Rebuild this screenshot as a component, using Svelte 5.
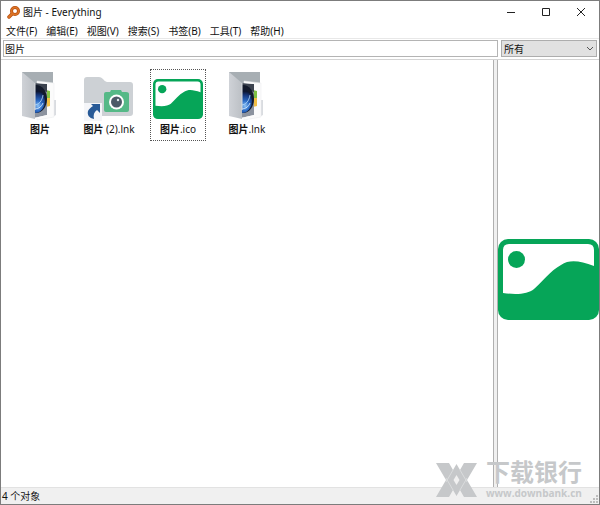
<script lang="ts">
	interface FileItem {
		match: string;
		rest: string;
		icon: 'folder' | 'camera' | 'image';
	}

	const menus = ['文件(F)', '编辑(E)', '视图(V)', '搜索(S)', '书签(B)', '工具(T)', '帮助(H)'];
	const filters = ['所有', '音频', '文档', '图片', '视频'];

	const files: FileItem[] = [
		{ match: '图片', rest: '', icon: 'folder' },
		{ match: '图片', rest: ' (2).lnk', icon: 'camera' },
		{ match: '图片', rest: '.ico', icon: 'image' },
		{ match: '图片', rest: '.lnk', icon: 'folder' }
	];

	let query = $state('图片');
	let filter = $state('所有');
	let selected = $state(2);

	let results = $derived(files.filter((f) => (f.match + f.rest).includes(query)));
</script>

{#snippet picture()}
	<svg class="picture" viewBox="0 0 101 81" aria-hidden="true">
		<rect width="101" height="81" rx="10" fill="#06a558" />
		<path
			d="M5 54V11Q5 5 11 5H90Q96 5 96 11V27C82 22 72 20 63 26C52 32 44 43 36 50C30 55 19 56 5 54Z"
			fill="#fff"
		/>
		<circle cx="18.500" cy="20.500" r="8.500" fill="#06a558" />
	</svg>
{/snippet}

{#snippet folder()}
	<svg class="folder" viewBox="0 0 50 50" aria-hidden="true">
		<defs>
			<linearGradient id="flap" x1="0" x2="1">
				<stop offset="0" stop-color="#cfd2d7" />
				<stop offset="1" stop-color="#bcc0c5" />
			</linearGradient>
			<radialGradient id="globe" cx="0.650" cy="0.700" r="0.600">
				<stop offset="0" stop-color="#8fc4f7" />
				<stop offset="0.350" stop-color="#2b6bc6" />
				<stop offset="0.750" stop-color="#16367a" />
				<stop offset="1" stop-color="#0d1630" />
			</radialGradient>
			<clipPath id="photo">
				<path d="M19 11L32 12V43L19 46Z" />
			</clipPath>
		</defs>
		<path d="M7 0H38V14H7Z" fill="#a7aeb3" />
		<path d="M37 28H41V43L37 45Z" fill="#d9dce0" />
		<path d="M22 9L39 11V45L22 48Z" fill="#fbfbfb" stroke="#e9eaec" stroke-width="0.500" />
		<path d="M31 18L35 19V26H31Z" fill="#7fc043" />
		<path d="M31 26H35V34L31 35Z" fill="#f3bf45" />
		<g clip-path="url(#photo)">
			<path d="M19 11L32 12V43L19 46Z" fill="#8c939f" />
			<path d="M19 11L32 12V20L19 16Z" fill="#3c434f" />
			<ellipse cx="21" cy="27" rx="11" ry="14" fill="#131a2b" />
			<ellipse cx="20" cy="29" rx="10" ry="12" fill="url(#globe)" />
			<path d="M19 33C24 33 27 29 28 23" fill="none" stroke="#b9dcfa" stroke-width="0.800" />
			<path d="M20 37C24 37 27 34 28 31" fill="none" stroke="#e3f2ff" stroke-width="0.800" />
		</g>
		<path d="M7 0L20 11V47L7 44Z" fill="url(#flap)" />
		<path d="M20 11V38" stroke="#d9dde1" stroke-width="1" />
	</svg>
{/snippet}

{#snippet camera()}
	<svg class="camera" viewBox="0 0 50 50" aria-hidden="true">
		<path d="M3 5H15Q17 5 19 7Q21 10 23 10H46Q49 10 49 13V41Q49 44 46 44H3Q0 44 0 41V8Q0 5 3 5Z" fill="#cdd1d5" />
		<path
			d="M22 20H26L27 18H37L38 20H42Q45 20 45 22V38Q45 40 43 40H22Q20 40 20 38V22Q20 20 22 20Z"
			fill="#55b987"
		/>
		<circle cx="32.500" cy="30" r="7.500" fill="#fff" />
		<circle cx="32.500" cy="30" r="5.500" fill="#4c5967" />
		<circle cx="34" cy="28" r="1.200" fill="#dfe6ea" />
		<path d="M0 31H18V49H0Z" fill="#f5f6f9" />
		<path
			d="M7 32H16V41L13 38C10 40 9 43 10 47C5 46 3 43 4 39C5 37 7 35 9 34Z"
			fill="#285a97"
		/>
	</svg>
{/snippet}

<div class="window">
	<header class="titlebar">
		<svg class="logo" viewBox="0 0 13 13" aria-hidden="true">
			<path d="M6 7L2 11" stroke="#b8500f" stroke-width="3.500" stroke-linecap="round" />
			<circle cx="8" cy="5" r="3.500" fill="#fff" stroke="#b8500f" stroke-width="3" />
			<circle cx="8" cy="5" r="3.500" fill="none" stroke="#dd7426" stroke-width="1.500" />
			<path d="M5 8L2 11" stroke="#dd7426" stroke-width="2" stroke-linecap="round" />
		</svg>
		<h1>图片 - Everything</h1>
		<button class="control" aria-label="最小化">
			<svg viewBox="0 0 10 10"><path d="M1 5.500H9" /></svg>
		</button>
		<button class="control" aria-label="最大化">
			<svg viewBox="0 0 10 10"><path d="M1.500 1.500H8.500V8.500H1.500Z" /></svg>
		</button>
		<button class="control" aria-label="关闭">
			<svg viewBox="0 0 10 10"><path d="M1 1L9 9M9 1L1 9" /></svg>
		</button>
	</header>

	<nav class="menubar">
		{#each menus as menu (menu)}
			<button class="menu">{menu}</button>
		{/each}
	</nav>

	<div class="searchbar">
		<input class="query" type="text" aria-label="搜索" bind:value={query} />
		<div class="filter">
			<select aria-label="筛选" bind:value={filter}>
				{#each filters as name (name)}
					<option>{name}</option>
				{/each}
			</select>
			<svg class="chevron" viewBox="0 0 8 5" aria-hidden="true"><path d="M1 1L4 4L7 1" /></svg>
		</div>
	</div>

	<main class="content">
		<div class="results">
			{#each results as file, i (file.match + file.rest)}
				<button class="file" class:selected={i === selected} onclick={() => (selected = i)}>
					<span class="thumb">
						{#if file.icon === 'folder'}
							{@render folder()}
						{:else if file.icon === 'camera'}
							{@render camera()}
						{:else}
							{@render picture()}
						{/if}
					</span>
					<span class="name"><b>{file.match}</b>{file.rest}</span>
				</button>
			{/each}
		</div>
		<div class="splitter"></div>
		<aside class="preview">
			{@render picture()}
		</aside>
	</main>

	<footer class="statusbar">
		<span>{results.length} 个对象</span>
		<svg class="grip" viewBox="0 0 8 8" aria-hidden="true">
			<path d="M6 0h2v2h-2zM3 3h2v2h-2zM6 3h2v2h-2zM0 6h2v2h-2zM3 6h2v2h-2zM6 6h2v2h-2z" />
		</svg>
	</footer>

	<div class="watermark">
		<svg viewBox="0 0 41 34" aria-hidden="true">
			<path d="M0 0H13L17 7L20.500 1L24 7L28 0H41L31 17L41 34H28L24 27L20.500 33L17 27L13 34H0L10 17Z" />
			<path class="cut" d="M17 7L10 19M24 7L31 19M17 27L10 15M24 27L31 15" />
			<path class="hole" d="M20.500 12L23.500 17L20.500 22L17.500 17Z" />
		</svg>
		<div class="brand">
			<span class="brand-name">下载银行</span>
			<span class="brand-url">www.downbank.cn</span>
		</div>
	</div>
</div>

<style>
	:global(body) {
		margin: 0;
	}

	.window {
		position: relative;
		display: flex;
		flex-direction: column;
		box-sizing: border-box;
		height: 100vh;
		border: 1px solid #7c7c7c;
		background: #fff;
		color: #111;
		font-family: 'Noto Sans', 'Noto Sans CJK SC', sans-serif;
		font-size: 10px;
		line-height: 14px;
	}

	button,
	input,
	select {
		margin: 0;
		padding: 0;
		border: none;
		border-radius: 0;
		background: transparent;
		color: inherit;
		font: inherit;
	}

	.titlebar {
		display: flex;
		align-items: center;
		height: 22px;
		padding: 0 1px 0 6px;
	}

	.logo {
		width: 13px;
		height: 13px;
		margin-right: 3px;
	}

	h1 {
		flex: 1;
		margin: 0;
		font-size: 10px;
		font-weight: 400;
	}

	.control {
		display: flex;
		align-items: center;
		justify-content: center;
		width: 35px;
		height: 22px;
	}

	.control svg {
		width: 10px;
		height: 10px;
		fill: none;
		stroke: #222;
	}

	.menubar {
		display: flex;
		gap: 9px;
		height: 15px;
		padding: 0 5px;
		border-bottom: 1px solid #e8e8e8;
	}

	.menu {
		white-space: nowrap;
	}

	.searchbar {
		display: flex;
		gap: 3px;
		padding: 1px 2px 2px;
		border-bottom: 1px solid #d4d4d4;
	}

	.query {
		flex: 1;
		min-width: 0;
		box-sizing: border-box;
		height: 17px;
		padding: 0 1px;
		border: 1px solid #b4b4b4;
		outline: none;
	}

	.filter {
		position: relative;
		width: 96px;
	}

	.filter select {
		display: block;
		appearance: none;
		box-sizing: border-box;
		width: 100%;
		height: 17px;
		padding: 0 2px;
		border: 1px solid #adadad;
		background: #e1e1e1;
	}

	.chevron {
		position: absolute;
		top: 6px;
		right: 3px;
		width: 8px;
		height: 5px;
		fill: none;
		stroke: #555;
		pointer-events: none;
	}

	.content {
		display: flex;
		flex: 1;
		min-height: 0;
	}

	.results {
		display: flex;
		flex: 1;
		flex-wrap: wrap;
		align-content: flex-start;
		gap: 13px;
		padding: 9px 11px;
	}

	.file {
		display: flex;
		flex-direction: column;
		align-items: center;
		box-sizing: border-box;
		width: 56px;
		height: 72px;
		padding-top: 2px;
		border: 1px solid transparent;
	}

	.file.selected {
		border: 1px dotted #555;
	}

	.thumb {
		display: flex;
		align-items: center;
		justify-content: center;
		width: 50px;
		height: 50px;
	}

	.folder,
	.camera {
		width: 50px;
		height: 50px;
	}

	.picture {
		display: block;
		width: 100%;
	}

	.thumb .picture {
		margin-top: 5px;
	}

	.name {
		white-space: nowrap;
	}

	.splitter {
		width: 3px;
		border: solid #b0b0b0;
		border-width: 0 1px;
		background: #f0f0f0;
		cursor: col-resize;
	}

	.preview {
		display: flex;
		align-items: center;
		width: 101px;
		padding-top: 12px;
	}

	.statusbar {
		display: flex;
		align-items: center;
		justify-content: space-between;
		height: 16px;
		padding-left: 1px;
		border-top: 1px solid #e2e2e2;
		background: #f0f0f0;
	}

	.grip {
		align-self: flex-end;
		width: 8px;
		height: 8px;
		padding: 1px;
		fill: #bdbdbd;
	}

	.watermark {
		position: absolute;
		right: 17px;
		bottom: 4px;
		display: flex;
		align-items: center;
		gap: 9px;
		color: #c6c8ca;
		pointer-events: none;
	}

	.watermark svg {
		width: 41px;
		height: 34px;
		fill: #c6c8ca;
	}

	.watermark .cut {
		fill: none;
		stroke: #dadcdd;
	}

	.watermark .hole {
		fill: #f0f0f0;
	}

	.brand {
		display: flex;
		flex-direction: column;
	}

	.brand-name {
		font-family: 'Liberation Sans', 'Noto Sans CJK SC', sans-serif;
		font-size: 24px;
		font-weight: 700;
		line-height: 27px;
	}

	.brand-url {
		font-family: 'Open Sans', sans-serif;
		font-size: 10px;
		font-weight: 700;
		line-height: 14px;
	}
</style>
